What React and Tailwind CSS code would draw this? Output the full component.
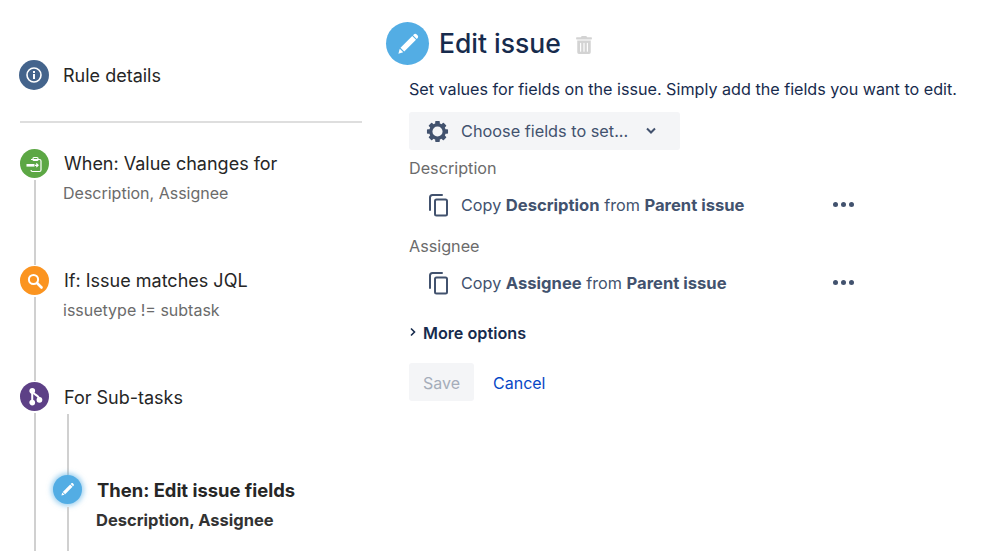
import React from 'react';
import { FaTrashAlt } from 'react-icons/fa';

function Pencil({ size }) {
  return (
    <svg width={size} height={size} viewBox="0 0 24 24">
      <path d="M15.4 5.6l3 3L9 18l-3-3z" fill="#fff" />
      <path d="M16.6 4.4c.7-.7 1.7-.7 2.4 0l.6.6c.7.7.7 1.7 0 2.4l-.6.6-3-3z" fill="#fff" />
      <path d="M5.4 15.8l2.8 2.8-3.9 1.1z" fill="#fff" />
    </svg>
  );
}

function Gear() {
  return (
    <svg width="23" height="23" viewBox="0 0 24 24" fill="#42526e">
      <circle cx="12" cy="12" r="7" fill="none" stroke="#42526e" strokeWidth="3.4" />
      {[0, 45, 90, 135, 180, 225, 270, 315].map((a) => (
        <rect key={a} x="9.6" y="1" width="4.8" height="4.5" rx="0.8" transform={`rotate(${a} 12 12)`} />
      ))}
    </svg>
  );
}

function CopyIcon() {
  return (
    <svg width="22" height="24" viewBox="0 0 22 24" fill="none" stroke="#42526e" strokeWidth="2">
      <path d="M14 2H4.5C3.1 2 2 3.1 2 4.5V17" strokeLinecap="round" />
      <rect x="7" y="6.5" width="12" height="16" rx="1.5" />
    </svg>
  );
}

function Dots() {
  return (
    <div className="flex gap-[3px] mb-[2px]">
      <span className="w-[5px] h-[5px] rounded-full bg-[#42526e]" />
      <span className="w-[5px] h-[5px] rounded-full bg-[#42526e]" />
      <span className="w-[5px] h-[5px] rounded-full bg-[#42526e]" />
    </div>
  );
}

function Step({ color, icon, title, sub, height }) {
  return (
    <div className="flex" style={{ height }}>
      <div className="w-[29px] flex flex-col items-center shrink-0">
        <div className={`w-[29px] h-[29px] rounded-full flex items-center justify-center ${color}`}>{icon}</div>
        <div className="w-[2px] flex-1 bg-[#d0d0d0] mt-[2px] mb-[1px]" />
      </div>
      <div className="ml-[15px]">
        <div className="text-[18px] leading-[29px] text-[#262626]">{title}</div>
        <div className="text-[16px] leading-[20px] mt-[-1px] text-[#6b6b6b] ml-[-1px] pt-[6px]">{sub}</div>
      </div>
    </div>
  );
}

function CopyRow({ field }) {
  return (
    <div className="flex items-center h-[38px] pl-[19px] w-[445px]">
      <CopyIcon />
      <div className="ml-[11px] flex-1 text-[16.2px] text-[#42526e]">
        Copy <b className="font-bold text-[16.6px]">{field}</b> from <b className="font-bold text-[16.6px]">Parent issue</b>
      </div>
      <Dots />
    </div>
  );
}

export default function App() {
  return (
    <div className="w-[998px] h-[551px] bg-white overflow-hidden flex font-['Inter',sans-serif]">
      {/* left: rule timeline */}
      <div className="w-[342px] ml-[20px] shrink-0 pt-[60px]">
        <div className="flex items-center h-[30px] ml-[-1px]">
          <div className="w-[30px] h-[30px] rounded-full bg-[#44648c] flex items-center justify-center">
            <svg width="18" height="18" viewBox="0 0 18 18" fill="none">
              <circle cx="9" cy="9" r="7" stroke="#fff" strokeWidth="1.6" />
              <rect x="8" y="8" width="2" height="5" fill="#fff" />
              <rect x="8" y="5" width="2" height="2" fill="#fff" />
            </svg>
          </div>
          <span className="ml-[14px] text-[18px] text-[#262626]">Rule details</span>
        </div>
        <div className="h-[2px] bg-[#dedede] mt-[31px] mb-[26px]" />
        <Step
          height={117}
          color="bg-[#5ca744]"
          title="When: Value changes for"
          sub="Description, Assignee"
          icon={
            <svg width="20" height="20" viewBox="0 0 20 20" fill="none">
              <path d="M6 5.5h8.5c.8 0 1.5.7 1.5 1.5v9c0 .8-.7 1.5-1.5 1.5H7.5c-.8 0-1.5-.7-1.5-1.5" stroke="#fff" strokeWidth="1.2" />
              <rect x="8" y="3.5" width="5" height="3" rx="1" stroke="#fff" strokeWidth="1.2" />
              <rect x="1.5" y="10" width="8" height="2.6" fill="#fff" />
              <path d="M10 11.3h2.5M11.3 9.5l1.8 1.8-1.8 1.8" stroke="#fff" strokeWidth="1.2" />
            </svg>
          }
        />
        <Step
          height={116}
          color="bg-[#fb9420]"
          title="If: Issue matches JQL"
          sub="issuetype != subtask"
          icon={
            <svg width="18" height="18" viewBox="0 0 18 18" fill="none" stroke="#fff">
              <circle cx="7.5" cy="7.5" r="4.6" strokeWidth="2" />
              <path d="M11 11l4.5 4.5" strokeWidth="2.6" strokeLinecap="round" />
            </svg>
          }
        />
        <div className="flex h-[169px]">
          <div className="w-[29px] flex flex-col items-center shrink-0">
            <div className="w-[29px] h-[29px] rounded-full bg-[#5d4086] flex items-center justify-center">
              <svg width="20" height="20" viewBox="0 0 18 18" fill="none" stroke="#fff" strokeWidth="1.8">
                <path d="M6.5 3.5v10.5M6.5 3.5c0 3.5 5.5 2.5 6.5 7.5" />
                <circle cx="6.5" cy="3.5" r="1.7" fill="#fff" />
                <circle cx="6.5" cy="14" r="1.7" fill="#fff" />
                <circle cx="13" cy="11.5" r="1.7" fill="#fff" />
              </svg>
            </div>
            <div className="w-[2px] flex-1 bg-[#d0d0d0] mt-[2px]" />
          </div>
          <div className="ml-[4px] flex-1">
            <div className="text-[18px] leading-[31px] text-[#262626] pl-[11px] h-[29px]">For Sub-tasks</div>
            <div className="flex h-[137px] mt-[3px]">
              <div className="w-[29px] flex flex-col items-center shrink-0">
                <div className="w-[2px] h-[61px] bg-[#d0d0d0]" />
                <div className="w-[29px] h-[29px] rounded-full bg-[#53ade4] shadow-[0_0_5px_2px_rgba(83,173,228,0.55)] flex items-center justify-center shrink-0">
                  <Pencil size={19} />
                </div>
                <div className="w-[2px] flex-1 bg-[#d0d0d0] mt-[3px]" />
              </div>
              <div className="ml-[15px] pt-[62px]">
                <div className="text-[18.4px] leading-[29px] font-bold text-[#262626]">Then: Edit issue fields</div>
                <div className="text-[16.5px] leading-[20px] font-bold text-[#333] ml-[-1px] mt-[5px]">Description, Assignee</div>
              </div>
            </div>
          </div>
        </div>
      </div>

      {/* right: edit issue panel */}
      <div className="ml-[24px] pt-[22px] flex-1">
        <div className="flex items-center h-[43px]">
          <div className="w-[43px] h-[43px] rounded-full bg-[#53ade4] flex items-center justify-center">
            <Pencil size={30} />
          </div>
          <h1 className="ml-[10px] text-[26.5px] font-medium text-[#172b4d]">Edit issue</h1>
          <FaTrashAlt className="ml-[14px] mt-[2px] text-[#d3d3d3]" size={18} />
        </div>
        <div className="ml-[23px]">
          <p className="text-[16.15px] leading-[20px] text-[#172b4d] mt-[14px]">
            Set values for fields on the issue. Simply add the fields you want to edit.
          </p>
          <div className="mt-[13px] w-[271px] h-[38px] rounded-[3px] bg-[#f4f5f7] flex items-center pl-[17px] text-[#42526e]">
            <Gear />
            <span className="ml-[12px] text-[16.3px]">Choose fields to set...</span>
            <svg className="ml-[17px]" width="12" height="8" viewBox="0 0 12 8" fill="none" stroke="#42526e" strokeWidth="2">
              <path d="M2 1.5l4 4 4-4" />
            </svg>
          </div>
          <div className="mt-[8px] text-[16.2px] leading-[20px] text-[#6b6b6b]">Description</div>
          <div className="mt-[8px]">
            <CopyRow field="Description" />
          </div>
          <div className="mt-[12px] text-[16.2px] leading-[20px] text-[#6b6b6b]">Assignee</div>
          <div className="mt-[8px]">
            <CopyRow field="Assignee" />
          </div>
          <div className="mt-[19px] flex items-center h-[24px]">
            <svg width="8" height="10" viewBox="0 0 8 10" fill="none" stroke="#172b4d" strokeWidth="1.6" className="mb-[3px]">
              <path d="M2 1.5l3.5 3.5L2 8.5" />
            </svg>
            <span className="ml-[6px] text-[16.2px] font-semibold text-[#172b4d]">More options</span>
          </div>
          <div className="mt-[18px] flex items-center">
            <button className="w-[65px] h-[38px] pt-[1px] rounded-[3px] bg-[#f4f5f7] text-[16px] text-[#a5adba]">Save</button>
            <span className="ml-[19px] pt-[1px] text-[16px] text-[#0747c6]">Cancel</span>
          </div>
        </div>
      </div>
    </div>
  );
}
